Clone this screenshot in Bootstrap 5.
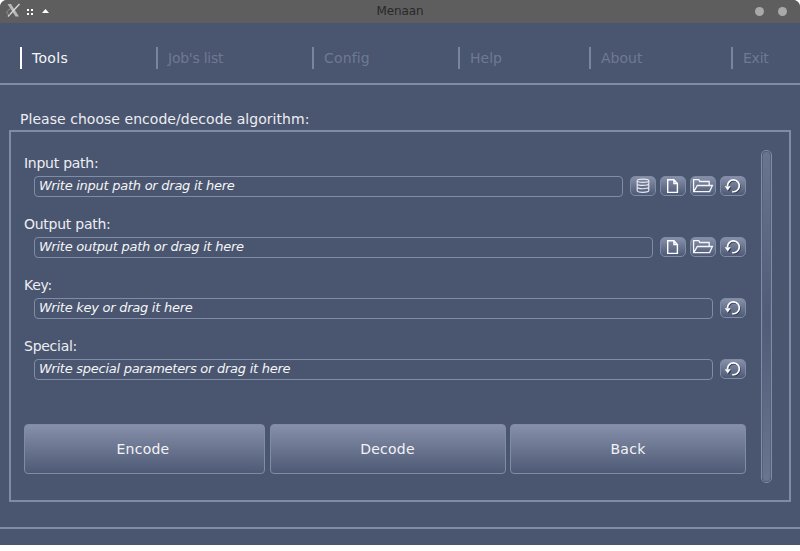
<!DOCTYPE html>
<html lang="en">
<head>
<meta charset="utf-8">
<meta name="viewport" content="width=device-width, initial-scale=1">
<title>Menaan</title>
<link href="https://cdn.jsdelivr.net/npm/bootstrap@5.3.0/dist/css/bootstrap.min.css" rel="stylesheet">
<style>
:root{--base:#4a556f;--line:#808ba6}
body{font-family:"DejaVu Sans",sans-serif;font-size:14px;line-height:20px;color:#eceef2;background:#fff;width:800px;height:551px;overflow:hidden}
.window{height:545px;background:var(--base);border-radius:7px 7px 0 0}
.titlebar{height:23px;background:#5e5e5e;color:#292929;font-size:12px;line-height:23px;border-radius:7px 7px 0 0}
.title{letter-spacing:-.1px}
.win-tools{left:0;top:0}
.win-dots{right:13px;top:7px;gap:14px}
.win-dots span{width:9px;height:9px;border-radius:50%;background:#a9a9a9}
.menu{height:62px;padding:24px 0 0 20px;border-bottom:2px solid var(--line);display:grid;grid-template-columns:136px 156px 146px 131px 142px 69px}
.menu a{height:22px;line-height:22px;border-left:2px solid #7a849e;padding-left:10px;color:#6f7994;text-decoration:none}
.menu a.active{border-color:#fff;color:#f4f5f7;letter-spacing:.3px}
.menu .tight{letter-spacing:-.25px}
.menu .loose{letter-spacing:.15px}
.heading{font-size:14px;line-height:20px;margin:24px 0 1px 20px;font-weight:400;letter-spacing:.04px}
.panel{margin:0 9px;height:372px;border:2px solid var(--line);padding:18px 17px 17px 13px}
.form-area{width:722px}
.field{height:61px;padding-top:3px}
.field label{display:block;line-height:20px;height:23px;letter-spacing:-.26px}
.field-row{padding-left:10px;gap:4px}
.field .form-control{height:21px;min-height:0;padding:0 4px 2px;background:transparent;border:1px solid var(--line);border-radius:4px;font-size:13px;line-height:17px;font-style:italic;letter-spacing:-.26px;color:#f4f5f7;margin-right:3px}
.field .form-control::placeholder{color:#f4f5f7;opacity:1}
.glossy{background:linear-gradient(#8690aa,#4e5975);border:1px solid var(--line);color:#f2f3f6;border-radius:5px;padding:0}
.glossy:hover{color:#fff;border-color:#fff}
.tool{width:26px;height:20px;flex:none;display:flex}
.tool svg{width:24px;height:18px;display:block}
.actions{margin-top:30px;display:grid;grid-template-columns:241px 236px 236px;column-gap:4.5px}
.actions .btn{height:50px;font-size:14px;border-radius:4px;letter-spacing:.25px}
.actions .btn:first-child{padding-right:3px}
.scroll-track{width:11px;height:333px;border:1px solid var(--line);border-radius:5px;padding:0}
.scroll-thumb{height:100%;border:1px solid #56617d;border-radius:4px;background:linear-gradient(#69748f,#505b77 50%,#69748f)}
.statusline{height:2px;background:var(--line);margin-top:25px}
</style>
</head>
<body>
<svg class="d-none" xmlns="http://www.w3.org/2000/svg">
  <symbol id="i-db" viewBox="0 0 24 18"><g fill="none" stroke="#e6e8ee" stroke-width="1.2"><ellipse cx="12" cy="3.8" rx="5.800" ry="1.600"/><path d="M6.200 4v2.700c0 2.300 11.600 2.300 11.600 0V4M6.200 7.300v2.700c0 2.300 11.600 2.300 11.600 0V7.300M6.200 10.600v3c0 2.400 11.600 2.400 11.600 0v-3"/></g></symbol>
  <symbol id="i-file" viewBox="0 0 24 18"><path d="M6.700 2.700h6.200l3.500 3.800v8.900H6.700zM12.900 2.700v3.800h3.500" fill="none" stroke="#fff" stroke-width="1.400"/></symbol>
  <symbol id="i-folder" viewBox="0 0 24 18"><path d="M2.600 14.500V2.600h5.200l1 1.900h9.400v3.800M2.800 14.600L6.300 8.500H21.400L18.600 14.600z" fill="none" stroke="#f4f5f8" stroke-width="1.300"/></symbol>
  <symbol id="i-reset" viewBox="0 0 24 18"><g transform="translate(1 .9)" opacity=".75"><path d="M6.500 8.500a5.800 5.800 0 1 1 4.900 6.100" fill="none" stroke="#20283a" stroke-width="1.300"/><path d="M4 9.500h5.500l-2.500 4z" fill="#20283a"/></g><path d="M6.500 9a5.900 5.900 0 1 1 4.700 5.600" fill="none" stroke="#fff" stroke-width="1.700"/><path d="M3.700 9.300h6L6.800 13.500z" fill="#fff"/></symbol>
</svg>
<div class="window">
  <header class="titlebar position-relative text-center">
    <svg class="win-tools position-absolute" width="56" height="23">
      <path d="M7.500 4h3.500l8 12.500h-3.500z" fill="#b8b8b8"/><path d="M19.500 4L8 16.500" stroke="#ddd" stroke-width="1.200"/><path d="M11 8.500C5 11 6.500 15 10 14.500" fill="none" stroke="#999"/>
      <path d="M27 9h2v2h-2zM31 9h2v2h-2zM27 13h2v2h-2zM31 13h2v2h-2zM42 13l3.500-4 3.500 4z" fill="#fff"/>
    </svg>
    <span class="title">Menaan</span>
    <div class="win-dots position-absolute d-flex"><span></span><span></span></div>
  </header>
  <nav class="menu">
    <a class="active" href="#">Tools</a><a class="tight" href="#">Job's list</a><a class="loose" href="#">Config</a><a href="#">Help</a><a href="#">About</a><a class="tight" href="#">Exit</a>
  </nav>
  <h1 class="heading">Please choose encode/decode algorithm:</h1>
  <main class="panel d-flex justify-content-between">
    <form class="form-area">
      <div class="field"><label for="in">Input path:</label>
        <div class="field-row d-flex"><input id="in" class="form-control" placeholder="Write input path or drag it here">
          <button type="button" class="btn glossy tool" aria-label="Database"><svg><use href="#i-db"/></svg></button>
          <button type="button" class="btn glossy tool" aria-label="File"><svg><use href="#i-file"/></svg></button>
          <button type="button" class="btn glossy tool" aria-label="Folder"><svg><use href="#i-folder"/></svg></button>
          <button type="button" class="btn glossy tool" aria-label="Reset"><svg><use href="#i-reset"/></svg></button></div></div>
      <div class="field"><label for="out">Output path:</label>
        <div class="field-row d-flex"><input id="out" class="form-control" placeholder="Write output path or drag it here">
          <button type="button" class="btn glossy tool" aria-label="File"><svg><use href="#i-file"/></svg></button>
          <button type="button" class="btn glossy tool" aria-label="Folder"><svg><use href="#i-folder"/></svg></button>
          <button type="button" class="btn glossy tool" aria-label="Reset"><svg><use href="#i-reset"/></svg></button></div></div>
      <div class="field"><label for="key">Key:</label>
        <div class="field-row d-flex"><input id="key" class="form-control" placeholder="Write key or drag it here">
          <button type="button" class="btn glossy tool" aria-label="Reset"><svg><use href="#i-reset"/></svg></button></div></div>
      <div class="field"><label for="special">Special:</label>
        <div class="field-row d-flex"><input id="special" class="form-control" placeholder="Write special parameters or drag it here">
          <button type="button" class="btn glossy tool" aria-label="Reset"><svg><use href="#i-reset"/></svg></button></div></div>
      <div class="actions">
        <button type="button" class="btn glossy">Encode</button>
        <button type="button" class="btn glossy">Decode</button>
        <button type="button" class="btn glossy">Back</button>
      </div>
    </form>
    <div class="scroll-track"><div class="scroll-thumb"></div></div>
  </main>
  <div class="statusline"></div>
</div>
<script src="https://cdn.jsdelivr.net/npm/bootstrap@5.3.0/dist/js/bootstrap.bundle.min.js"></script>
</body>
</html>
